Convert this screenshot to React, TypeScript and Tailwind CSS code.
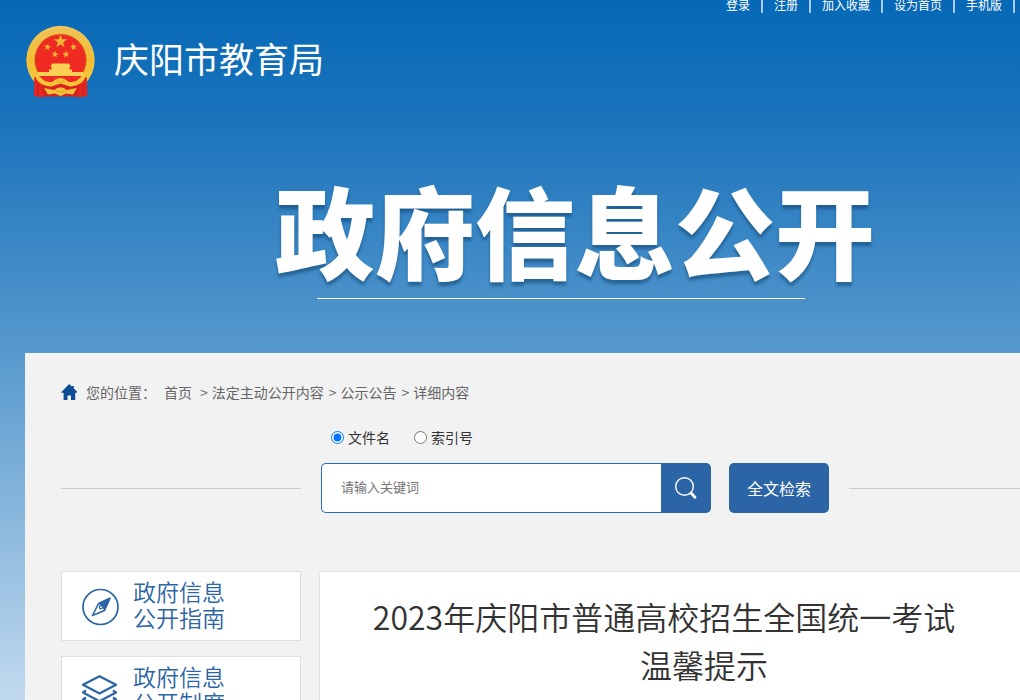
import React from 'react';

const topLinks = ['登录', '注册', '加入收藏', '设为首页', '手机版'];

function Emblem() {
  const star = '0,-10 2.4,-3.2 9.5,-3.1 3.8,1.3 5.9,8.1 0,4 -5.9,8.1 -3.8,1.3 -9.5,-3.1 -2.4,-3.2';
  return (
    <svg viewBox="0 0 70 74" className="h-[74px] w-[70px] shrink-0" role="img" aria-label="国徽">
      <defs>
        <linearGradient id="gold" x1="0" y1="0" x2="0" y2="1">
          <stop offset="0" stopColor="#f0c560" />
          <stop offset="0.5" stopColor="#f3be35" />
          <stop offset="1" stopColor="#f9d04a" />
        </linearGradient>
      </defs>
      <circle cx="35.5" cy="35" r="34.2" fill="url(#gold)" />
      <circle cx="35.5" cy="35" r="30" fill="none" stroke="#e0a020" strokeWidth="4" strokeDasharray="1 2" opacity="0.2" />
      <circle cx="35.5" cy="35" r="26.4" fill="#d79518" />
      <circle cx="35.5" cy="35" r="25.6" fill="#ee2a23" />
      <g fill="#f2b632">
        <polygon points={star} transform="translate(35.5 16.5) scale(0.7)" />
        <polygon points={star} transform="translate(22.5 22) rotate(10) scale(0.38)" />
        <polygon points={star} transform="translate(48.5 22) rotate(-10) scale(0.38)" />
        <polygon points={star} transform="translate(30 29.3) rotate(10) scale(0.38)" />
        <polygon points={star} transform="translate(41 29.3) rotate(-10) scale(0.38)" />
      </g>
      <path d="M27 38.5h17l1.5 3.5h-20zM26.500 41.500h18v5h-18zM24 44.500h23v2.500H24zM13 47h45l1 4H12z" fill="#fbcf52" />
      <path d="M9.5 52c3 1 5 2 8 5l8 3 10-2.500 10 2.500 8-3c3-3 5-4 8-5l1 18.500-4 1.500h-7l-4-.500H23l-4 .500h-7l-3-1.500z" fill="#d9211d" />
      <path d="M14 51h43l-7 6-14.500-4L21 57z" fill="#ee2a23" />
      <path d="M9.5 52c2 1.500 5 2.500 7 6l1 14-8.500-1.500zM61.500 52c-2 1.500-5 2.500-7 6l-1 14 8.500-1.500z" fill="#e62822" />
      <path d="M13 59v11M58 59v11" stroke="#b81a18" strokeWidth="1" />
      <path d="M10 50c5 5 11 7 16 7 3 0 4-4 9.500-4s6.500 4 9.500 4c5 0 11-2 16-7-1 6-7 11-15 11.500-4 0-6-2.500-10.500-2.500s-6.500 2.500-10.500 2.500C17 61 11 56 10 50z" fill="#f7c437" />
      <path d="M19 63l10.500 2c2-2 4-2.500 6-2.500s4 .500 6 2.500L52 63l-4 6.500-7-1-5.500 2.500-5.500-2.500-7 1z" fill="#f6c138" />
      <path d="M31.500 55l4 3.500 4-3.500M30 65l5.500 2.500L41 65" fill="none" stroke="#dba024" strokeWidth="1" />
    </svg>
  );
}

function HomeIcon() {
  return (
    <svg viewBox="0 0 16 16" className="h-4 w-4" fill="#0d4c94" aria-hidden="true">
      <path d="M8.200 0l2.600 2.600V2h2v2.600L16.400 8v.800h-2.200V16H10v-4.500H6.500V16H2.600V8.800H.400V8z" />
    </svg>
  );
}

function SearchIcon() {
  return (
    <svg viewBox="0 0 24 24" className="h-6 w-6" fill="none" stroke="#fff" aria-hidden="true">
      <circle cx="10.500" cy="10.500" r="8.800" strokeWidth="1.400" />
      <path d="M17 17l4 4.200" strokeWidth="2.800" strokeLinecap="round" />
    </svg>
  );
}

function CompassIcon() {
  return (
    <svg viewBox="0 0 38 38" className="h-[38px] w-[38px] shrink-0" fill="none" stroke="#2c65a5" aria-hidden="true">
      <circle cx="18.500" cy="19" r="17.500" strokeWidth="1.700" />
      <path d="M28 10.200L16.500 15.500 10.500 27.500 22.500 22.500z" strokeWidth="1.600" strokeLinejoin="round" />
      <path d="M28 10.200L16.500 15.500 20.500 17.500 22.500 22.500z" fill="#2c65a5" />
      <circle cx="18.800" cy="19.200" r="1.600" strokeWidth="1.200" />
    </svg>
  );
}

function LayersIcon() {
  return (
    <svg viewBox="0 0 36 34" className="h-[34px] w-[36px] shrink-0" fill="none" stroke="#2c65a5" strokeWidth="2.200" strokeLinejoin="round" aria-hidden="true">
      <path d="M17.500 1.200L34 9.800l-16.500 8.700L1 9.800z" />
      <path d="M4 15.500l-3 2 16.500 8.700L34 17.500l-3-2" />
      <path d="M4 22.500l-3 2 16.500 8.300L34 24.500l-3-2" />
    </svg>
  );
}

function SideLink({ icon, first, second }: { icon: React.ReactNode; first: string; second: string }) {
  return (
    <a href="#" className="flex h-[70px] items-center border border-[#dfdfdf] bg-white pb-1 pl-5 text-[23px] leading-[26px] font-[350] text-[#2c65a5]">
      <span className="flex w-[51px] items-center pt-1.5">{icon}</span>
      <span>
        {first}
        <br />
        {second}
      </span>
    </a>
  );
}

export default function App() {
  return (
    <div className="min-h-screen overflow-x-hidden bg-[linear-gradient(180deg,#0668b6_0px,#1a74bc_120px,#297cc0_175px,#5598cd_345px,#c1d9ee_700px)] font-['Noto_Sans_CJK_SC','Microsoft_YaHei',sans-serif]">
      <div className="min-w-[1150px]">
        <div className="mx-auto w-[1100px]">
          <nav className="ml-auto flex h-[13px] w-[399px] gap-[11px] text-xs leading-[10px] text-white">
            {topLinks.map((t) => (
              <React.Fragment key={t}>
                <a href="#" className="whitespace-nowrap">{t}</a>
                <span className="h-[13px] w-0.5 bg-[#a9cbe6]" />
              </React.Fragment>
            ))}
          </nav>

          <header className="pt-3">
            <a href="#" className="flex items-center gap-[19px] text-white">
              <Emblem />
              <span className="pb-2 text-[35px] leading-[50px]">庆阳市教育局</span>
            </a>
            <div className="flex h-[254px] flex-col items-center pt-[66px]">
              <h1 className="pb-[5px] text-[100px] leading-[128px] font-black whitespace-nowrap text-white [text-shadow:0px_4px_3px_rgba(20,75,120,0.6)]">政府信息公开</h1>
              <div className="mr-7 h-px w-[488px] bg-white" />
            </div>
          </header>

          <main className="bg-[#f2f2f2] px-9 pt-[29px] pb-10">
            <div className="flex h-5 items-center text-sm text-[#666]">
              <HomeIcon />
              <span className="ml-[9px]">您的位置：</span>
              <a href="#" className="ml-2">首页</a>
              <span className="mr-1 ml-2">&gt;</span>
              <a href="#">法定主动公开内容</a>
              <span className="mr-1 ml-[5px]">&gt;</span>
              <a href="#">公示公告</a>
              <span className="mr-1 ml-[5px]">&gt;</span>
              <span>详细内容</span>
            </div>

            <form className="pt-[25px]" onSubmit={(e) => e.preventDefault()}>
              <div className="flex h-5 items-center gap-6 pl-[270px] text-sm text-[#333]">
                <label className="flex items-center gap-1">
                  <input type="radio" name="field" defaultChecked className="h-[13px] w-[13px]" />
                  文件名
                </label>
                <label className="flex items-center gap-1">
                  <input type="radio" name="field" className="h-[13px] w-[13px]" />
                  索引号
                </label>
              </div>
              <div className="mt-4 flex items-center">
                <div className="mr-5 h-px w-[240px] bg-[#ccc]" />
                <input
                  type="text"
                  aria-label="关键词"
                  placeholder="请输入关键词"
                  className="h-[50px] w-[340px] rounded-l-[5px] border border-r-0 border-[#2b6cb8] bg-white px-[19px] pb-1 text-[13px] text-[#333] placeholder:text-[#757575]"
                />
                <button type="submit" aria-label="搜索" className="flex h-[50px] w-[50px] items-center justify-center rounded-r-[5px] bg-[#2c65a5]">
                  <SearchIcon />
                </button>
                <button type="button" className="ml-[18px] h-[50px] w-[100px] rounded-[5px] bg-[#2c65a5] text-base text-white">全文检索</button>
                <div className="ml-5 h-px flex-1 bg-[#ccc]" />
              </div>
            </form>

            <div className="mt-[58px] flex gap-[18px]">
              <aside className="flex w-[240px] flex-col gap-[15px]">
                <SideLink icon={<CompassIcon />} first="政府信息" second="公开指南" />
                <SideLink icon={<LayersIcon />} first="政府信息" second="公开制度" />
              </aside>
              <article className="flex-1 border border-[#e4e4e4] bg-white px-[30px] pt-5 pb-8">
                <h2 className="text-center text-[32px] leading-[48px] font-[350] text-[#333]">
                  <span className="block pr-20">2023年庆阳市普通高校招生全国统一考试</span>
                  <span className="block">温馨提示</span>
                </h2>
              </article>
            </div>
          </main>
        </div>
      </div>
    </div>
  );
}
